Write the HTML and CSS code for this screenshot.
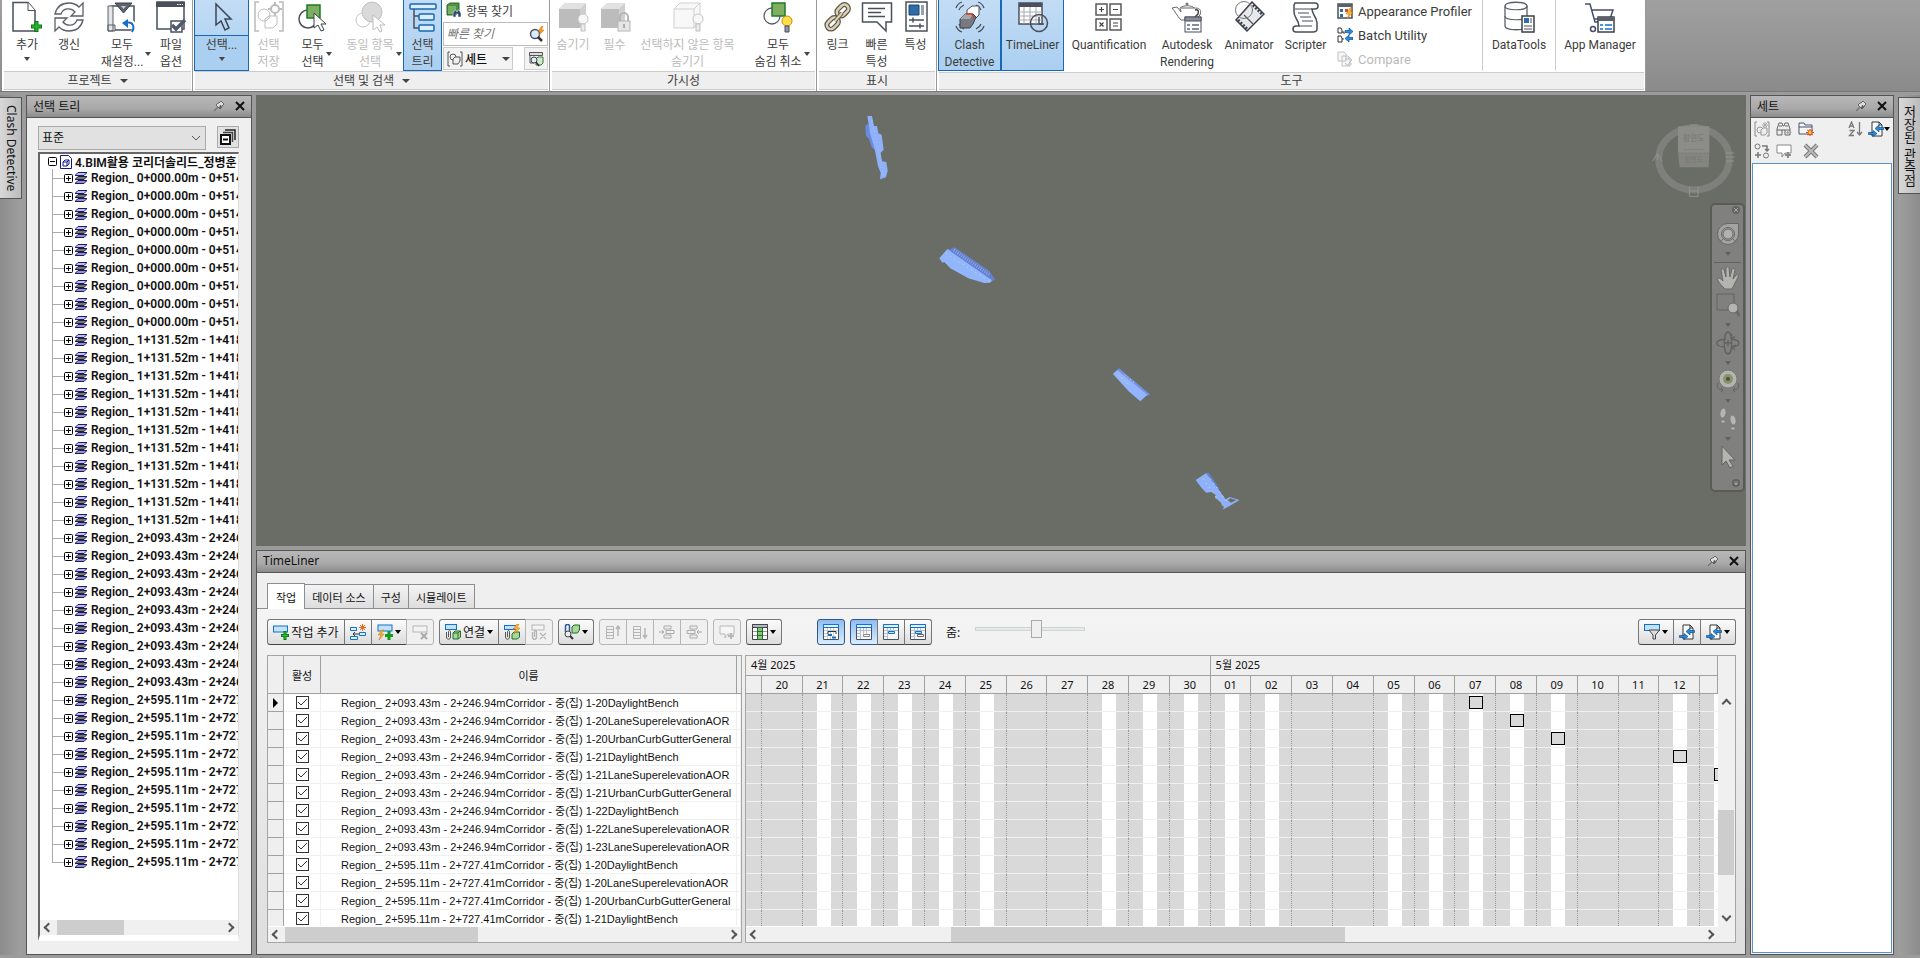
FILE: index.html
```html
<!DOCTYPE html>
<html lang="ko">
  <head>
    <meta charset="utf-8">
    <title>TimeLiner</title>
    <link rel="stylesheet" href="styles.css">
  </head>
  <body>
    <svg class="sprite" aria-hidden="true">
      <defs>
        <linearGradient id="metal" x1="0" y1="0" x2="0" y2="1">
          <stop offset="0" stop-color="#fff"/>
          <stop offset="1" stop-color="#c9ccd2"/>
        </linearGradient>
        <linearGradient id="fade" x1="0" y1="0" x2="0" y2="1">
          <stop offset="0" stop-color="#f6f6f6"/>
          <stop offset="1" stop-color="#d2d2d2"/>
        </linearGradient>
      </defs>

      <!-- ribbon, 32px -->
      <symbol id="i-add" viewBox="0 0 32 32">
        <path d="M2 1.500h15l7 8v20.500h-22z" fill="url(#metal)" stroke="#4a4f5a" stroke-width="1.500"/>
        <path d="M17 1.500v8h7" fill="#fff" stroke="#4a4f5a"/>
        <path d="M25.500 20v11M20 25.500h11" stroke="#0b7a14" stroke-width="4"/>
        <path d="M25.500 21v9M21 25.500h9" stroke="#22b92c" stroke-width="2"/>
      </symbol>
      <symbol id="i-refresh" viewBox="0 0 32 32">
        <path d="M2 13C4 5 10 2 16 2c5 0 8 2 10 4l4-4v13H18l4-4c-4-5-12-4-14 2z" fill="url(#metal)" stroke="#5a5f68" stroke-width="1.300"/>
        <path d="M30 19c-2 8-8 11-14 11-5 0-8-2-10-4l-4 4V17h12l-4 4c4 5 12 4 14-2z" fill="url(#metal)" stroke="#5a5f68" stroke-width="1.300"/>
      </symbol>
      <symbol id="i-reset" viewBox="0 0 32 32">
        <path d="M6 5h22v24H6z" fill="url(#metal)" stroke="#4a4f5a" stroke-width="1.500"/>
        <path d="M2 5h5v25H2zM2 24h7v6H2z" fill="#e4e6ea" stroke="#5a5f68"/>
        <path d="M9 2h17l-8.500 10z" fill="#5d6370" stroke="#3c404a"/>
        <path d="M15 5h5l-2.500 3z" fill="#c9ccd2"/>
        <path d="M20 21c8-2 10 4 7 10" fill="none" stroke="#fff" stroke-width="4"/>
        <path d="M20 22c7-2 9 4 6 9" fill="none" stroke="#1470c8" stroke-width="2"/>
        <path d="M22 18v9l-6-5z" fill="#1470c8"/>
      </symbol>
      <symbol id="i-options" viewBox="0 0 32 32">
        <rect x="2" y="1" width="27" height="27" fill="url(#metal)" stroke="#4a4f5a" stroke-width="1.500"/>
        <path d="M1 1h29v5H1z" fill="#4a4f5a"/>
        <path d="M22 3.500h6" stroke="#fff" stroke-dasharray="1.500 1"/>
        <rect x="16" y="20" width="11" height="11" fill="#fff" stroke="#4a4f5a" stroke-width="1.500"/>
        <path d="M17 24l4 4 9-9" fill="none" stroke="#4f5a6d" stroke-width="3.500"/>
      </symbol>
      <symbol id="i-cursor" viewBox="0 0 32 32">
        <path d="M10 3v21l5-4 4 9 4-2-4-9h6z" fill="url(#metal)" stroke="#3c4656" stroke-width="1.500"/>
      </symbol>
      <symbol id="i-saveset" viewBox="0 0 32 32">
        <path d="M6 1H2v29h4M26 1h4v29h-4" fill="none" stroke="#b9b9b9" stroke-width="1.500"/>
        <circle cx="11" cy="14" r="6" fill="url(#fade)" stroke="#bdbdbd"/>
        <path d="M12 18l4-3h8v8l-4 4h-8z" fill="url(#fade)" stroke="#bdbdbd"/>
        <circle cx="22" cy="8" r="4" fill="none" stroke="#bdbdbd" stroke-width="2"/>
        <path d="M22 1v3M22 12v3M15 8h3M26 8h3" stroke="#bdbdbd" stroke-width="2"/>
      </symbol>
      <symbol id="i-selectall" viewBox="0 0 32 32">
        <circle cx="11" cy="18" r="9" fill="url(#metal)" stroke="#4a4f5a" stroke-width="1.500"/>
        <rect x="10" y="4" width="13" height="13" fill="#7fae63" stroke="#1f7a26" stroke-width="1.500"/>
        <path d="M17 12v15l4-3 3 6 3-1-3-6h5z" fill="#fff" stroke="#3c404a"/>
      </symbol>
      <symbol id="i-selectsame" viewBox="0 0 32 32">
        <circle cx="9" cy="19" r="7" fill="url(#fade)" stroke="#c4c4c4"/>
        <circle cx="18" cy="11" r="10" fill="#d9d9d9" stroke="#c0c0c0"/>
        <path d="M19 14v15l4-3 3 5 2-1-2-6h5z" fill="#fff" stroke="#bdbdbd"/>
      </symbol>
      <symbol id="i-tree" viewBox="0 0 32 32">
        <path d="M7 8v19h8M7 15h8" fill="none" stroke="#4a4f5a" stroke-width="1.500"/>
        <rect x="3" y="3" width="26" height="5" rx="1" fill="#dceefb" stroke="#1668b0" stroke-width="1.500"/>
        <rect x="12" y="13" width="15" height="6" rx="1" fill="#dceefb" stroke="#1668b0" stroke-width="1.500"/>
        <rect x="12" y="24" width="15" height="6" rx="1" fill="#dceefb" stroke="#1668b0" stroke-width="1.500"/>
      </symbol>
      <symbol id="i-hide" viewBox="0 0 32 32">
        <path d="M2 8l6-6h21v19l-6 6H2z" fill="#cfcfcf"/>
        <path d="M2 8h21v19H2z" fill="#bcbcbc"/>
        <path d="M2 8l6-6h21l-6 6z" fill="#e2e2e2"/>
        <circle cx="26" cy="18" r="5" fill="#f7f7f7" stroke="#c6c6c6"/>
        <path d="M24 23h4v7h-4z" fill="#ececec" stroke="#bdbdbd"/>
      </symbol>
      <symbol id="i-require" viewBox="0 0 32 32">
        <path d="M2 8l6-6h18v19l-6 6H2z" fill="#cfcfcf"/>
        <path d="M2 8h18v19H2z" fill="#bcbcbc"/>
        <path d="M2 8l6-6h18l-6 6z" fill="#e2e2e2"/>
        <path d="M21 20v-4a4 4 0 018 0v4" fill="none" stroke="#b5b5b5" stroke-width="2"/>
        <rect x="19" y="20" width="12" height="10" fill="#e6e6e6" stroke="#b5b5b5"/>
        <path d="M25 23v4" stroke="#999" stroke-width="1.500"/>
      </symbol>
      <symbol id="i-unselected" viewBox="0 0 32 32">
        <path d="M2 8l6-6h20v18l-6 7H2zM2 8h20v19M22 8l6-6" fill="#f8f8f8" stroke="#cfcfcf"/>
        <circle cx="26" cy="18" r="5" fill="#f7f7f7" stroke="#c6c6c6"/>
        <path d="M24 23h4v7h-4z" fill="#ececec" stroke="#bdbdbd"/>
      </symbol>
      <symbol id="i-unhide" viewBox="0 0 32 32">
        <circle cx="10" cy="15" r="8" fill="url(#metal)" stroke="#5a5f68" stroke-width="1.300"/>
        <rect x="10" y="2" width="13" height="13" fill="#7fae63" stroke="#1f7a26" stroke-width="1.500"/>
        <circle cx="25" cy="20" r="5" fill="#ffe04a" stroke="#c28a10"/>
        <path d="M23 25h4v6h-4z" fill="#8d97a6" stroke="#4a4f5a"/>
      </symbol>
      <symbol id="i-link" viewBox="0 0 32 32">
        <g fill="none" stroke="#5b564a" stroke-width="5">
          <rect x="17" y="3" width="8" height="13" rx="4" transform="rotate(45 21 9)"/>
          <rect x="7" y="16" width="8" height="13" rx="4" transform="rotate(45 11 22)"/>
        </g>
        <g fill="none" stroke="#ddd2b4" stroke-width="2.500">
          <rect x="17" y="3" width="8" height="13" rx="4" transform="rotate(45 21 9)"/>
          <rect x="7" y="16" width="8" height="13" rx="4" transform="rotate(45 11 22)"/>
        </g>
        <path d="M13 20l7-8" stroke="#5b564a" stroke-width="4"/>
        <path d="M13 20l7-8" stroke="#ddd2b4" stroke-width="2"/>
      </symbol>
      <symbol id="i-quick" viewBox="0 0 32 32">
        <path d="M1.500 2h29v19H25v9l-9-9H1.500z" fill="url(#metal)" stroke="#4a4f5a" stroke-width="1.500"/>
        <path d="M7 7.500h17M7 11.500h13M7 15.500h17" stroke="#4a4f5a" stroke-width="1.500"/>
      </symbol>
      <symbol id="i-props" viewBox="0 0 32 32">
        <rect x="6" y="1" width="21" height="29" fill="url(#metal)" stroke="#4a4f5a" stroke-width="1.500"/>
        <path d="M9 4h10v10H9z" fill="#2d6cab" stroke="#1d456e"/>
        <path d="M21 4h3v10h-3z" fill="#9aa0aa"/>
        <path d="M9 19h15M9 25h15M13 16.500v5M20 22.500v5" stroke="#4a4f5a" stroke-width="1.500"/>
      </symbol>
      <symbol id="i-clash" viewBox="0 0 32 32">
        <path d="M8 1c-3 1-5 3-6 6M10 4C8 5 6 6 5 9M24 1c3 1 5 3 6 6M22 4c2 1 4 2 5 5M8 31c-3-1-5-3-6-6M10 28c-2-1-4-2-5-5M24 31c3-1 5-3 6-6M22 28c2-1 4-2 5-5" fill="none" stroke="#4a4f5a" stroke-width="1.300"/>
        <path d="M13 9l5-4h7v9l-5 5-7-3z" fill="#fff" stroke="#4a4f5a"/>
        <path d="M6 18l5-5h8l3 3-3 7-3 4H6z" fill="#777a80" stroke="#3c404a"/>
        <path d="M6 18l5-5h8l-3 5z" fill="#a5a8ad"/>
        <path d="M12 13h6l2 4" fill="none" stroke="#e03020" stroke-width="1.500"/>
      </symbol>
      <symbol id="i-timeliner" viewBox="0 0 32 32">
        <path d="M2 2h23v21H2z" fill="#fff" stroke="#4a4f5a" stroke-width="1.500"/>
        <path d="M2 2h23v4H2z" fill="#4a4f5a"/>
        <path d="M2 11h23M2 15h23M2 19h23M7 6v17M13 6v17M19 6v17" stroke="#a6a9b0"/>
        <circle cx="22" cy="22" r="8.500" fill="url(#metal)" stroke="#4a4f5a" stroke-width="1.500"/>
        <path d="M22 16v7h5" fill="none" stroke="#4a4f5a" stroke-width="1.500"/>
      </symbol>
      <symbol id="i-quant" viewBox="0 0 32 32">
        <path d="M3 3h11v11H3zM17 3h11v11H17zM3 18h11v11H3zM17 18h11v11H17z" fill="url(#metal)" stroke="#5a5a5a" stroke-width="1.500"/>
        <path d="M6 8.500h5M8.500 6v5M20 8.500h5M6.500 21.500l4 4M10.500 21.500l-4 4M20 22h5M20 25h5" stroke="#444" stroke-width="1.200"/>
      </symbol>
      <symbol id="i-render" viewBox="0 0 32 32">
        <path d="M9 7c3-3 12-3 14 0 5 0 8 1 6 7l-5 5H10C6 15 4 10 1 7l5-1 4 5z" fill="url(#metal)" stroke="#6a6a6a"/>
        <path d="M24 9c3-1 4 1 3 4l-3 3" fill="none" stroke="#444" stroke-width="1.500"/>
        <circle cx="16" cy="3" r="1.500" fill="#777"/>
        <path d="M10 7h13" stroke="#666"/>
        <rect x="14" y="16" width="16" height="15" fill="#fff" stroke="#4a4f5a"/>
        <path d="M14 16h16v4H14z" fill="#8a909c" stroke="#4a4f5a"/>
        <path d="M16 24h3M16 28h3M21 24h7M21 28h7" stroke="#5a6b85" stroke-width="1.500"/>
      </symbol>
      <symbol id="i-animator" viewBox="0 0 32 32">
        <path d="M19 1L31 13 14 30 3 19z" fill="#e8e9ec" stroke="#3c404a" stroke-width="1.500"/>
        <path d="M20 4l9 9M5 19l9 9" stroke="#3c404a" stroke-width="3" stroke-dasharray="2 1.500"/>
        <path d="M11 14l9 9" stroke="#555" stroke-width="1.200"/>
        <circle cx="11" cy="9" r="8.500" fill="url(#metal)" stroke="#777"/>
      </symbol>
      <symbol id="i-scripter" viewBox="0 0 32 32">
        <path d="M5 2h20c4 0 4 6 0 6h-3c0 6 5 8 5 14v6c0 3-3 3-4 3H6c-4 0-4-6 0-6h3c0-6-5-8-5-14V4z" fill="url(#metal)" stroke="#4a4f5a" stroke-width="1.500"/>
        <path d="M5 8h17M9 25h13M8 12h11M10 16h11M12 20h11" stroke="#4a4f5a" stroke-width="1.200"/>
      </symbol>
      <symbol id="i-data" viewBox="0 0 32 32">
        <path d="M2 5c0-5 22-5 22 0v20c0 5-22 5-22 0z" fill="url(#metal)" stroke="#5a5f68" stroke-width="1.300"/>
        <path d="M2 5c0 5 22 5 22 0M2 15c0 5 22 5 22 0" fill="none" stroke="#5a5f68" stroke-width="1.200"/>
        <rect x="19" y="15" width="12" height="16" fill="#fff" stroke="#3c404a" stroke-width="1.500"/>
        <path d="M21 17h5v5h-5z" fill="#2d6cab"/>
        <path d="M28 17v5M21 25h8M21 28h8" stroke="#4a4f5a"/>
      </symbol>
      <symbol id="i-app" viewBox="0 0 32 32">
        <path d="M1 3h5l5 18h16M7 9h22l-3 9H10" fill="url(#metal)" stroke="#454e6e" stroke-width="1.500"/>
        <circle cx="9" cy="28" r="2.500" fill="#fff" stroke="#454e6e" stroke-width="1.500"/>
        <rect x="14" y="16" width="16" height="15" fill="#fff" stroke="#3c404a" stroke-width="1.500"/>
        <path d="M14 16h16v4H14z" fill="#5a5f68"/>
        <path d="M16 24h3M16 28h3M21 24h7M21 28h7" stroke="#1470c8" stroke-width="1.500"/>
      </symbol>

      <!-- small, 16px -->
      <symbol id="s-find" viewBox="0 0 16 16">
        <path d="M1 3l3-2h9v9l-3 3H1z" fill="#4f9147" stroke="#2a6a28"/>
        <path d="M2 4h8v8H2z" fill="#76b061"/>
        <path d="M7 15v-4l2-3h1l1 2 1-2h1l2 3v4h-3v-3h-2v3z" fill="#2e4a78" stroke="#fff" stroke-width=".5"/>
      </symbol>
      <symbol id="s-quickfind" viewBox="0 0 16 16">
        <circle cx="6" cy="8" r="4.500" fill="#d9ecfa" stroke="#4a5464" stroke-width="1.500"/>
        <path d="M9 11l4 4" stroke="#333" stroke-width="2.500"/>
        <path d="M13 0L9 5h2.500L10 9l5-5h-2.500L14 0z" fill="#ff9a1a" stroke="#c66a00" stroke-width=".5"/>
      </symbol>
      <symbol id="s-sets" viewBox="0 0 16 16">
        <path d="M3 1H1v14h2M13 1h2v14h-2" fill="none" stroke="#555"/>
        <circle cx="6" cy="6" r="3" fill="#eee" stroke="#555"/>
        <path d="M6 8l2-2h5v4l-2 3H6z" fill="#eee" stroke="#555"/>
      </symbol>
      <symbol id="s-inspect" viewBox="0 0 16 16">
        <path d="M1.500 1.500h13v3h-13z" fill="#ddd" stroke="#555"/>
        <path d="M2 4v8h4" fill="none" stroke="#555"/>
        <path d="M8 8l2-2h5v6l-2 2H8z" fill="#d5e8cd" stroke="#2f7a35"/>
        <circle cx="6" cy="9" r="3" fill="#dcebf7" stroke="#444"/>
        <path d="M8 11l3 4" stroke="#333" stroke-width="1.500"/>
      </symbol>
      <symbol id="s-appear" viewBox="0 0 16 16">
        <path d="M1 1h14v14H1z" fill="#fff" stroke="#4a4f5a" stroke-width="1.500"/>
        <path d="M1 1h14v3H1z" fill="#5a5f68"/>
        <path d="M3 6h3v3H3zM3 11h3v3H3z" fill="#2d6cab"/><path d="M8 6h3v3H8z" fill="#d34a2e"/>
        <path d="M13 5l-4 6h3l-2 5 6-7h-3l2-4z" fill="#ffb52e" stroke="#c66a00" stroke-width=".5"/>
      </symbol>
      <symbol id="s-batch" viewBox="0 0 16 16">
        <path d="M1 1h3l1 2v3H1zM1 9h3l1 2v4H1zM5 5h2v2M5 12h2" fill="#fff" stroke="#333"/>
        <path d="M8 3.500h4V1l4 3.500L12 8V5.500H8zM16 10.500h-4V8l-4 3.500 4 3.500v-2.500h4z" fill="#2a8ae0" stroke="#0f4d8c" stroke-width=".7"/>
      </symbol>
      <symbol id="s-compare" viewBox="0 0 16 16">
        <path d="M1 1h6l2 2v7H1zM5 5h6l2 2v8H5z" fill="#f6f6f6" stroke="#c2c2c2"/>
        <path d="M8 8h4V6l3 3-3 3M15 13h-4v2l-3-3" fill="none" stroke="#bdbdbd"/>
      </symbol>
      <symbol id="s-pin" viewBox="0 0 12 12">
        <path d="M1 11l4-4" stroke="#777" stroke-width="1.500"/>
        <path d="M3 5l4 4 2-2V6l2-2-3-3-2 2H5z" fill="#ddd" stroke="#666"/>
        <path d="M7 5l2 1-2 3-1-1z" fill="#555"/>
      </symbol>
      <symbol id="s-close" viewBox="0 0 12 12">
        <path d="M2 2l8 8M10 2l-8 8" stroke="#111" stroke-width="2"/>
      </symbol>
      <symbol id="s-collapse" viewBox="0 0 16 16">
        <path d="M5 1h10v10" fill="none" stroke="#222" stroke-width="1.500"/>
        <path d="M3 3.500h9.500V13" fill="none" stroke="#444" stroke-width="1.500"/>
        <rect x="1" y="6" width="9" height="9" fill="#fff" stroke="#111" stroke-width="2"/>
        <path d="M3 10.500h5" stroke="#111" stroke-width="2"/>
      </symbol>
      <symbol id="s-plus" viewBox="0 0 9 9">
        <rect x=".5" y=".5" width="8" height="8" rx="1" fill="#fff" stroke="#000"/>
        <path d="M2 4.500h5M4.500 2v5" stroke="#000"/>
      </symbol>
      <symbol id="s-minus" viewBox="0 0 9 9">
        <rect x=".5" y=".5" width="8" height="8" rx="1" fill="#fff" stroke="#000"/>
        <path d="M2 4.500h5" stroke="#000"/>
      </symbol>
      <symbol id="s-layer" viewBox="0 0 12 12">
        <path d="M3 .5h9l-3 3H0z" fill="#c4c4c4" stroke="#14148c"/>
        <path d="M3 4.500h9l-3 3H0z" fill="#84841a" stroke="#14148c"/>
        <path d="M3 8.500h9l-3 3H0z" fill="#999" stroke="#14148c"/>
      </symbol>
      <symbol id="s-model" viewBox="0 0 12 14">
        <path d="M.5.500h8l3 3v10H.5z" fill="#fff" stroke="#14148c"/>
        <path d="M3 7l2-2h4v4L7 11H3zM3 7h4v4M7 7l2-2" fill="none" stroke="#14148c"/>
      </symbol>

      <!-- sets toolbar -->
      <symbol id="p-save" viewBox="0 0 16 16">
        <path d="M3 1H1v14h2M13 1h2v14h-2" fill="none" stroke="#8a8a8a"/>
        <circle cx="6" cy="9" r="3" fill="#eee" stroke="#999"/>
        <path d="M7 9l2-2h4v5l-2 2H7z" fill="#eee" stroke="#999"/>
        <path d="M11 1v6M8 4h6M9 2l4 4M13 2L9 6" stroke="#aaa"/>
      </symbol>
      <symbol id="p-find" viewBox="0 0 16 16">
        <path d="M1 14V8l2-6h3l1 3h1l1-3h3l2 6v6H9V9H6v5z" fill="#eee" stroke="#666"/>
        <path d="M1 9h5M9 9h5M3 5h3M9 5h3" stroke="#666"/>
        <path d="M12 8v7M8.500 11.500h7M10 9l5 5M15 9l-5 5" stroke="#aaa"/>
      </symbol>
      <symbol id="p-folder" viewBox="0 0 16 16">
        <path d="M1 13V2h5l1 2h7v9z" fill="#f4f6f8" stroke="#4a5468"/>
        <path d="M1 6h13" stroke="#4a5468"/>
        <path d="M12 8v7M8 11.500h8M9.500 9l5 5M14.500 9l-5 5" stroke="#e5481a" stroke-width="1.200"/>
        <circle cx="12" cy="11.500" r="1.500" fill="#ffd83a"/>
      </symbol>
      <symbol id="p-sort" viewBox="0 0 16 16">
        <path d="M1 7l2.500-6L6 7M2 5h3M1.500 9.500H6l-4.500 5H6" fill="none" stroke="#777" stroke-width="1.300"/>
        <path d="M11.500 1v13M9 11l2.500 3 2.500-3" fill="none" stroke="#777" stroke-width="1.300"/>
      </symbol>
      <symbol id="p-export" viewBox="0 0 16 16">
        <path d="M4 1h7l3 3v11H4z" fill="#fff" stroke="#333"/>
        <path d="M11 1v3h3" fill="none" stroke="#333"/>
        <path d="M15.500 6.500H11V4L7 7.500l4 3.500V8.500h4.500zM.5 11.500H5v-2l4 3-4 3v-2H.5z" fill="#2a8ae0" stroke="#0f4d8c" stroke-width=".7"/>
      </symbol>
      <symbol id="p-dup" viewBox="0 0 16 16">
        <circle cx="3.500" cy="3.500" r="2.500" fill="none" stroke="#777"/>
        <circle cx="12" cy="12.500" r="2.500" fill="none" stroke="#777"/>
        <path d="M8 3h5v5M11 6l2 2 2-2M4 9v6M1 12h6" fill="none" stroke="#777" stroke-width="1.500"/>
      </symbol>
      <symbol id="p-comment" viewBox="0 0 16 16">
        <path d="M1 2h14v8H9l-3 4v-4H1z" fill="#fff" stroke="#888"/>
        <path d="M12 9v6M9 12h6" stroke="#888" stroke-width="2"/>
      </symbol>
      <symbol id="p-delete" viewBox="0 0 16 16">
        <path d="M2 2l12 12M14 2L2 14" stroke="#777" stroke-width="4"/>
        <path d="M2 2l12 12M14 2L2 14" stroke="#bbb" stroke-width="2"/>
      </symbol>

      <!-- timeliner toolbar -->
      <symbol id="t-add" viewBox="0 0 16 16">
        <rect x=".5" y="2" width="14" height="6" fill="#c3e2f7" stroke="#1470c8"/>
        <path d="M12 7v9M8 11.500h8" stroke="#0b7a14" stroke-width="3"/>
        <path d="M12 8v7M9 11.500h6" stroke="#2cc636" stroke-width="1"/>
      </symbol>
      <symbol id="t-insert" viewBox="0 0 16 16">
        <path d="M.5 3.500h6v3h-6zM9.500 8.500h6v3h-6zM.5 12.500h7v3h-7z" fill="#dcf0fb" stroke="#1470c8"/>
        <path d="M9 10H3M5 8l-2 2 2 2" fill="none" stroke="#333"/>
        <path d="M12.500 0v7M9 3.500h7M10 1l5 5M15 1l-5 5" stroke="#e5681a"/>
      </symbol>
      <symbol id="t-auto" viewBox="0 0 16 16">
        <rect x="1" y="1" width="14" height="6" fill="#c3e2f7" stroke="#1470c8"/>
        <path d="M5 6l-4 5h3l-2 5 5-6H4l3-4z" fill="#ffb52e" stroke="#c66a00" stroke-width=".5"/>
        <path d="M12 7v9M8 11.500h8" stroke="#149a1e" stroke-width="3"/>
      </symbol>
      <symbol id="t-del" viewBox="0 0 16 16">
        <rect x="1" y="2" width="14" height="6" fill="#f3f3f3" stroke="#b5b5b5"/>
        <path d="M9 9l6 6M15 9l-6 6" stroke="#aaa" stroke-width="2"/>
      </symbol>
      <symbol id="t-attach" viewBox="0 0 16 16">
        <rect x=".5" y=".5" width="11" height="5" fill="#c3e2f7" stroke="#1470c8"/>
        <path d="M1.500 8v5c0 3 4 3 4 0V8c0-2-2-2-2 0v5" fill="none" stroke="#555"/>
        <path d="M8 9l2-2h5.500v6l-2 2H8z" fill="#a9d79a" stroke="#1f6f28"/>
        <path d="M8 9h5v6M13 9l2-2" fill="none" stroke="#1f6f28"/>
      </symbol>
      <symbol id="t-rules" viewBox="0 0 16 16">
        <rect x=".5" y="1.500" width="12" height="4" fill="#c3e2f7" stroke="#1470c8"/>
        <path d="M1.500 8v5c0 3 4 3 4 0V8c0-2-2-2-2 0v5" fill="none" stroke="#555"/>
        <path d="M8 10l2-2h5.500v5l-2 2H8z" fill="#a9d79a" stroke="#1f6f28"/>
        <path d="M13 0L9 5h3l-2 5 6-6h-3l2-4z" fill="#ffb52e" stroke="#c66a00" stroke-width=".5"/>
      </symbol>
      <symbol id="t-clear" viewBox="0 0 16 16">
        <rect x="1" y="1" width="12" height="5" fill="#f3f3f3" stroke="#b5b5b5"/>
        <path d="M1.500 8v5c0 3 4 3 4 0V8c0-2-2-2-2 0v5M9 9l6 6M15 9l-6 6" fill="none" stroke="#b5b5b5" stroke-width="1.300"/>
      </symbol>
      <symbol id="t-findobj" viewBox="0 0 16 16">
        <path d="M1.500 8V2c0-2 4-2 4 0v5" fill="none" stroke="#2d5c9c" stroke-width="1.500"/>
        <path d="M8 3l2-2h5.500v5l-2 3H8z" fill="#a9d79a" stroke="#1f6f28"/>
        <circle cx="4" cy="10" r="3" fill="#eee" stroke="#444"/>
        <path d="M6 12l3 3" stroke="#333" stroke-width="2"/>
      </symbol>
      <symbol id="t-up" viewBox="0 0 16 16">
        <path d="M1.500 2.500h7v12h-7zM1 5.500h8M1 8.500h8M1 11.500h8" fill="none" stroke="#b5b5b5"/>
        <path d="M13 12V2M11 5l2-3 2 3" fill="none" stroke="#b5b5b5" stroke-width="1.500"/>
      </symbol>
      <symbol id="t-down" viewBox="0 0 16 16">
        <path d="M1.500 2.500h7v12h-7zM1 5.500h8M1 8.500h8M1 11.500h8" fill="none" stroke="#b5b5b5"/>
        <path d="M13 4v10M11 11l2 3 2-3" fill="none" stroke="#b5b5b5" stroke-width="1.500"/>
      </symbol>
      <symbol id="t-indent" viewBox="0 0 16 16">
        <path d="M5 2h7v3H5zM7 6.500h8v3H7zM5 11h7v3H5zM0 8h5M3 6l2 2-2 2" fill="none" stroke="#aaa"/>
      </symbol>
      <symbol id="t-outdent" viewBox="0 0 16 16">
        <path d="M4 2h7v3H4zM1 6.500h8v3H1zM4 11h7v3H4zM11 8h5M13 6l-2 2 2 2" fill="none" stroke="#aaa"/>
      </symbol>
      <symbol id="t-comment" viewBox="0 0 16 16">
        <path d="M1 2h14v8H9l-3 4v-4H1z" fill="#f6f6f6" stroke="#b8b8b8"/>
        <path d="M12 9v6M9 12h6" stroke="#b8b8b8" stroke-width="2"/>
      </symbol>
      <symbol id="t-columns" viewBox="0 0 16 16">
        <path d="M.5.500h15v15H.5z" fill="#fff" stroke="#444"/>
        <path d="M.5.500h15v3H.5z" fill="#b4b4cc" stroke="#444"/>
        <path d="M1 7.500h14M1 11.500h14" stroke="#999"/>
        <path d="M5.500 3.500h5v12h-5z" fill="#8cc47c" stroke="#1f6f28"/>
        <path d="M5 7.500h6M5 11.500h6" stroke="#1f6f28"/>
      </symbol>
      <symbol id="t-gantt" viewBox="0 0 16 16">
        <path d="M.5.500h15v15H.5z" fill="#fff" stroke="#4a4f5a"/>
        <path d="M.5.500h15v3H.5z" fill="#dcefff" stroke="#1470c8"/>
        <path d="M4.500 4v11M7.500 4v11M10.500 4v11M1 6.500h14M1 9.500h3M1 12.500h3" stroke="#c4ccd6"/>
        <path d="M5 10V7.500h8V10" stroke="#333" fill="none"/>
        <path d="M5 11h4M9 13.500h4" stroke="#1470c8" stroke-width="2"/>
      </symbol>
      <symbol id="t-plan" viewBox="0 0 16 16">
        <path d="M.5.500h15v15H.5z" fill="#f3f6fa" stroke="#4a4f5a"/>
        <path d="M.5.500h15v3H.5z" fill="#dcefff" stroke="#1470c8"/>
        <path d="M4.500 4v11M7.500 4v6M10.500 4v6M1 6.500h14M1 9.500h3M1 12.500h3" stroke="#b6c0cc"/>
        <path d="M7.500 10.500h6v2h-6z" fill="#fff" stroke="#888"/>
      </symbol>
      <symbol id="t-actual" viewBox="0 0 16 16">
        <path d="M.5.500h15v15H.5z" fill="#f3f6fa" stroke="#4a4f5a"/>
        <path d="M.5.500h15v3H.5z" fill="#dcefff" stroke="#1470c8"/>
        <path d="M4.500 4v11M7.500 4v4M10.500 4v4M1 6.500h14M1 9.500h3M1 12.500h3" stroke="#b6c0cc"/>
        <path d="M5.500 7.500h6v2h-6z" fill="#c3e2f7" stroke="#1470c8"/>
      </symbol>
      <symbol id="t-both" viewBox="0 0 16 16">
        <path d="M.5.500h15v15H.5z" fill="#f3f6fa" stroke="#4a4f5a"/>
        <path d="M.5.500h15v3H.5z" fill="#dcefff" stroke="#1470c8"/>
        <path d="M4.500 4v11M7.500 4v4M10.500 4v4M1 6.500h14M1 9.500h3M1 12.500h3" stroke="#b6c0cc"/>
        <path d="M5.500 7.500h6v2h-6z" fill="#c3e2f7" stroke="#1470c8"/>
        <path d="M7.500 10.500h6v2h-6z" fill="#fff" stroke="#666"/>
      </symbol>
      <symbol id="t-filter" viewBox="0 0 16 16">
        <rect x=".5" y=".5" width="15" height="6" fill="#c3e2f7" stroke="#1470c8"/>
        <path d="M5 6h10.500l-4 5v4H9v-4z" fill="#ddd" stroke="#444"/>
      </symbol>

      <!-- navigation bar -->
      <symbol id="n-wheel" viewBox="0 0 24 24">
        <path d="M12 1.500h10.500V12A10.500 10.500 0 1112 1.500z" fill="#a3a4a0" stroke="#686966"/>
        <circle cx="12" cy="12" r="6.500" fill="none" stroke="#686966"/>
        <circle cx="12" cy="12" r="5" fill="#b1b2ae" stroke="#686966"/>
        <path d="M4 20l4-4M20 20l-4-4" stroke="#686966"/>
      </symbol>
      <symbol id="n-pan" viewBox="0 0 24 24">
        <path d="M9 23c-3-3-6-6-8-10 2-2 4 0 6 2L5 4c1-2 3-1 3 0l2 7V2c1-2 3-1 3 0l1 9 2-8c1-1 3-1 3 1l-2 9 3-4c2-1 3 0 2 2l-4 8-2 4z" fill="#b4b5b1" stroke="#686966"/>
      </symbol>
      <symbol id="n-zoom" viewBox="0 0 24 24">
        <path d="M1 1h17v16H1z" fill="none" stroke="#62635f"/>
        <path d="M20 18l4 5" stroke="#6a6b68" stroke-width="3"/>
        <circle cx="17" cy="15" r="5" fill="#b4b5b1" stroke="#686966"/>
      </symbol>
      <symbol id="n-orbit" viewBox="0 0 24 24">
        <path d="M12 1c5 0 5 22 0 22S7 1 12 1M10 8C-2 9-2 15 8 16M15 8c10 1 11 7 1 8M12 9v6M9 12h6M16 3l-1 4 4-1M20 14l-4 2 3 3" fill="none" stroke="#62635f" stroke-width="1.300"/>
      </symbol>
      <symbol id="n-look" viewBox="0 0 24 24">
        <circle cx="12" cy="10" r="9" fill="#b4b5b0" stroke="#777"/>
        <circle cx="12" cy="10" r="5" fill="#88936c"/>
        <circle cx="12" cy="10" r="2" fill="#4a5144"/>
        <path d="M2 14c-2 3 0 7 4 7M22 14c2 3 0 7-4 7M5 19l2 2-2 2M19 19l-2 2 2 2" fill="none" stroke="#62635f"/>
      </symbol>
      <symbol id="n-walk" viewBox="0 0 24 24">
        <g fill="#b4b5b1" stroke="#777" stroke-width=".7">
          <ellipse cx="7" cy="6" rx="3" ry="5" transform="rotate(12 7 6)"/>
          <path d="M5 13h4v3H5z"/>
          <ellipse cx="17" cy="13" rx="3" ry="5" transform="rotate(-12 17 13)"/>
          <path d="M15 20h4v3h-4z"/>
        </g>
      </symbol>
      <symbol id="n-select" viewBox="0 0 24 24">
        <path d="M6 1v19l4-4 4 7 3-2-4-6h6z" fill="#b4b5b1" stroke="#62635f"/>
      </symbol>
    </svg>

    <header class="ribbon">
      <section class="ribbon-panel">
        <div class="ribbon-tools project-tools">
          <button class="tool"><svg><use href="#i-add"/></svg><span class="tool-label">추가</span><i class="caret"></i></button>
          <button class="tool"><svg><use href="#i-refresh"/></svg><span class="tool-label">갱신</span></button>
          <button class="tool tool-reset"><svg><use href="#i-reset"/></svg><span class="tool-label with-caret"><span>모두<br>재설정...</span><i class="caret"></i></span></button>
          <button class="tool tool-narrow"><svg><use href="#i-options"/></svg><span class="tool-label">파일<br>옵션</span></button>
        </div>
        <h2 class="ribbon-title">프로젝트<i class="caret caret-big"></i></h2>
      </section>

      <section class="ribbon-panel select-panel">
        <div class="ribbon-tools">
          <button class="tool tool-select active split"><svg><use href="#i-cursor"/></svg><span class="tool-label">선택...</span><i class="caret"></i></button>
          <button class="tool tool-small" disabled><svg><use href="#i-saveset"/></svg><span class="tool-label">선택<br>저장</span></button>
          <button class="tool tool-medium"><svg><use href="#i-selectall"/></svg><span class="tool-label with-caret"><span>모두<br>선택</span><i class="caret"></i></span></button>
          <button class="tool tool-wide" disabled><svg><use href="#i-selectsame"/></svg><span class="tool-label with-caret"><span>동일 항목<br>선택</span><i class="caret"></i></span></button>
          <button class="tool tool-small active"><svg><use href="#i-tree"/></svg><span class="tool-label">선택<br>트리</span></button>
          <div class="find-box">
            <button class="find-items"><svg><use href="#s-find"/></svg>항목 찾기</button>
            <label class="quick-find">
              <input type="text" placeholder="빠른 찾기" aria-label="빠른 찾기">
              <svg><use href="#s-quickfind"/></svg>
            </label>
            <div class="sets-row">
              <button class="sets-menu"><svg><use href="#s-sets"/></svg>세트<i class="caret caret-big"></i></button>
              <button class="inspect" aria-label="선택 검사기"><svg><use href="#s-inspect"/></svg></button>
            </div>
          </div>
        </div>
        <h2 class="ribbon-title">선택 및 검색<i class="caret caret-big"></i></h2>
      </section>

      <section class="ribbon-panel">
        <div class="ribbon-tools">
          <button class="tool tool-hide" disabled><svg><use href="#i-hide"/></svg><span class="tool-label">숨기기</span></button>
          <button class="tool tool-small" disabled><svg><use href="#i-require"/></svg><span class="tool-label">필수</span></button>
          <button class="tool tool-unselected" disabled><svg><use href="#i-unselected"/></svg><span class="tool-label">선택하지 않은 항목<br>숨기기</span></button>
          <button class="tool tool-unhide"><svg><use href="#i-unhide"/></svg><span class="tool-label with-caret"><span>모두<br>숨김 취소</span><i class="caret"></i></span></button>
        </div>
        <h2 class="ribbon-title">가시성</h2>
      </section>

      <section class="ribbon-panel">
        <div class="ribbon-tools">
          <button class="tool tool-small"><svg><use href="#i-link"/></svg><span class="tool-label">링크</span></button>
          <button class="tool tool-small"><svg><use href="#i-quick"/></svg><span class="tool-label">빠른<br>특성</span></button>
          <button class="tool tool-small"><svg><use href="#i-props"/></svg><span class="tool-label">특성</span></button>
        </div>
        <h2 class="ribbon-title">표시</h2>
      </section>

      <section class="ribbon-panel">
        <div class="ribbon-tools">
          <button class="tool tool-clash active"><svg><use href="#i-clash"/></svg><span class="tool-label">Clash<br>Detective</span></button>
          <button class="tool tool-clash active"><svg><use href="#i-timeliner"/></svg><span class="tool-label">TimeLiner</span></button>
          <button class="tool tool-quant"><svg><use href="#i-quant"/></svg><span class="tool-label">Quantification</span></button>
          <button class="tool tool-wide"><svg><use href="#i-render"/></svg><span class="tool-label">Autodesk<br>Rendering</span></button>
          <button class="tool tool-animator"><svg><use href="#i-animator"/></svg><span class="tool-label">Animator</span></button>
          <button class="tool tool-select"><svg><use href="#i-scripter"/></svg><span class="tool-label">Scripter</span></button>
          <div class="tool-list">
            <button><svg><use href="#s-appear"/></svg>Appearance Profiler</button>
            <button><svg><use href="#s-batch"/></svg>Batch Utility</button>
            <button disabled><svg><use href="#s-compare"/></svg>Compare</button>
          </div>
          <button class="tool tool-data"><svg><use href="#i-data"/></svg><span class="tool-label">DataTools</span></button>
          <button class="tool tool-app"><svg><use href="#i-app"/></svg><span class="tool-label">App Manager</span></button>
        </div>
        <h2 class="ribbon-title">도구</h2>
      </section>
    </header>

    <div class="workspace">
      <div class="dock dock-left"><button class="dock-tab">Clash Detective</button></div>

      <aside class="panel tree-panel">
        <div class="panel-title">
          <h2>선택 트리</h2>
          <button aria-label="고정"><svg><use href="#s-pin"/></svg></button>
          <button aria-label="닫기"><svg><use href="#s-close"/></svg></button>
        </div>
        <div class="tree-options">
          <select class="tree-select" aria-label="트리 보기"><option>표준</option></select>
          <button class="collapse-button" aria-label="모두 축소"><svg><use href="#s-collapse"/></svg></button>
        </div>
        <div class="tree-box">
          <div class="tree">
            <div class="tree-root"><svg class="toggle"><use href="#s-minus"/></svg><svg class="model"><use href="#s-model"/></svg>4.BIM활용 코리더솔리드_정병훈</div>
            <ul class="js-tree"></ul>
          </div>
          <div class="scrollbar">
            <button class="arrow-left" aria-label="왼쪽"></button>
            <div class="track"><div class="thumb tree-thumb"></div></div>
            <button class="arrow-right" aria-label="오른쪽"></button>
          </div>
        </div>
      </aside>

      <main class="center">
        <section class="viewport">
          <svg class="scene" viewBox="0 0 1490 451" preserveAspectRatio="xMidYMid slice">
            <g transform="translate(594 5) scale(.3333)">
              <path d="M46 78l8-8 26 82-14-9-10-28-8-8z" fill="#6a8ade"/>
              <path d="M52 48h14l6 30h9l4 22 10 4 6 46-9 8 4 26 13 2 4 26-5 20-18 6 2-20-8-20-10-50-14-50z" fill="#8fb0fb"/>
              <path d="M66 62l20 90 14 76" fill="none" stroke="#d8e2b8" stroke-width="2" stroke-dasharray="2 9"/>
              <path d="M290 450l24-8 104 70 17 26-11 8z" fill="#6580cf"/>
              <path d="M312 450l106 74" fill="none" stroke="#9ab4f5" stroke-width="10" stroke-dasharray="2 5"/>
              <path d="M268 475l24-28 134 94-5 7-18 1-48-14-54-30-18-19-6 2z" fill="#92b6fc"/>
              <path d="M288 460l130 84" fill="none" stroke="#eef09a" stroke-width="2" stroke-dasharray="3 12"/>
              <path d="M789 822l18-17 93 78-10 5z" fill="#7290e4"/>
              <path d="M789 822l13-12 90 74-21 20-35-30z" fill="#93b4ff"/>
              <path d="M806 826l30 28M824 824l34 28" stroke="#f0f070" stroke-width="3" stroke-dasharray="3 8"/>
              <path d="M1064 1122l11-5 33 47-2 6-12 4z" fill="#6584d4"/>
              <path d="M1037 1140l31-20 37 48 22 30 12-7 30 9-29 17-22 12 4-8-15-20-12-6 2-10-12-9-16 2-14-14z" fill="#8fb0fb"/>
              <path d="M1133 1200l8-5 18 5-16 8z" fill="#6a6c66"/>
              <path d="M1060 1136l58 82M1080 1136l50 68" fill="none" stroke="#f0f070" stroke-width="3" stroke-dasharray="3 13"/>
            </g>
          </svg>

          <svg class="view-cube" viewBox="36 98 252 225">
            <ellipse cx="162" cy="206" rx="106" ry="93" fill="none" stroke="#7e807b" stroke-width="21"/>
            <path d="M114 108h94v80h-94z" fill="#8c8d89"/>
            <path d="M114 188h94l-2 43h-87z" fill="#848581"/>
            <path d="M112 188h98M132 178h62" stroke="#727370" stroke-width="2" stroke-dasharray="8 3"/>
            <path d="M38 212l14-22 14 22M52 190v20M258 188h24M256 200h28M258 212h24M148 288v30M174 288v30M148 302h26M148 318h26M148 104h26" fill="none" stroke="#92938f" stroke-width="3"/>
            <text x="161" y="152" class="cube-face">평면도</text>
            <text x="161" y="216" class="cube-side">정면도</text>
          </svg>

          <nav class="nav-bar">
            <button class="nav-dot" aria-label="닫기"><svg viewBox="0 0 8 8"><circle cx="4" cy="4" r="4" fill="#62635f"/><path d="M2 2l4 4M6 2L2 6" stroke="#aaa"/></svg></button>
            <button class="nav-button nav-wheel" aria-label="휠"><svg><use href="#n-wheel"/></svg><i class="caret"></i></button>
            <button class="nav-button nav-pan" aria-label="초점이동"><svg><use href="#n-pan"/></svg></button>
            <button class="nav-button" aria-label="줌"><svg><use href="#n-zoom"/></svg><i class="caret"></i></button>
            <button class="nav-button" aria-label="궤도"><svg><use href="#n-orbit"/></svg><i class="caret"></i></button>
            <button class="nav-button" aria-label="둘러보기"><svg><use href="#n-look"/></svg><i class="caret"></i></button>
            <button class="nav-button" aria-label="보행시선"><svg><use href="#n-walk"/></svg><i class="caret"></i></button>
            <button class="nav-button" aria-label="선택"><svg><use href="#n-select"/></svg></button>
            <button class="nav-dot" aria-label="사용자화"><svg viewBox="0 0 8 8"><circle cx="4" cy="4" r="4" fill="#62635f"/><path d="M2 3h4M2.500 4.500h3L4 6z" fill="#aaa" stroke="#aaa" stroke-width=".7"/></svg></button>
          </nav>
        </section>

        <section class="panel timeliner">
          <div class="panel-title">
            <h2>TimeLiner</h2>
            <button aria-label="고정"><svg><use href="#s-pin"/></svg></button>
            <button aria-label="닫기"><svg><use href="#s-close"/></svg></button>
          </div>

          <div class="tabs">
            <button class="tab selected">작업</button>
            <button class="tab">데이터 소스</button>
            <button class="tab">구성</button>
            <button class="tab">시뮬레이트</button>
          </div>

          <div class="task-page">
            <div class="toolbar">
              <div class="group">
                <button class="add-task"><svg><use href="#t-add"/></svg>작업 추가</button>
                <button aria-label="작업 삽입"><svg><use href="#t-insert"/></svg></button>
                <button class="menu" aria-label="작업 자동 추가"><svg><use href="#t-auto"/></svg><i class="caret"></i></button>
                <button disabled aria-label="작업 삭제"><svg><use href="#t-del"/></svg></button>
              </div>
              <div class="group">
                <button class="attach"><svg><use href="#t-attach"/></svg>연결<i class="caret"></i></button>
                <button aria-label="규칙을 사용하여 자동 연결"><svg><use href="#t-rules"/></svg></button>
                <button disabled aria-label="연결 지우기"><svg><use href="#t-clear"/></svg></button>
              </div>
              <div class="group">
                <button class="menu" aria-label="항목 찾기"><svg><use href="#t-findobj"/></svg><i class="caret"></i></button>
              </div>
              <div class="group">
                <button disabled aria-label="위로 이동"><svg><use href="#t-up"/></svg></button>
                <button disabled aria-label="아래로 이동"><svg><use href="#t-down"/></svg></button>
                <button disabled aria-label="들여쓰기"><svg><use href="#t-indent"/></svg></button>
                <button disabled aria-label="내어쓰기"><svg><use href="#t-outdent"/></svg></button>
              </div>
              <div class="group">
                <button disabled aria-label="주석 추가"><svg><use href="#t-comment"/></svg></button>
              </div>
              <div class="group">
                <button class="menu" aria-label="열"><svg><use href="#t-columns"/></svg><i class="caret"></i></button>
              </div>
              <div class="group gantt-group">
                <button class="pressed" aria-label="Gantt 차트 표시"><svg><use href="#t-gantt"/></svg></button>
              </div>
              <div class="group">
                <button class="pressed" aria-label="계획 날짜"><svg><use href="#t-plan"/></svg></button>
                <button aria-label="실제 날짜"><svg><use href="#t-actual"/></svg></button>
                <button aria-label="계획 및 실제 날짜"><svg><use href="#t-both"/></svg></button>
              </div>
              <label class="zoom-label" for="zoom">줌:</label>
              <input class="zoom" id="zoom" type="range" min="0" max="100" value="56">
              <div class="group group-end">
                <button class="menu" aria-label="필터"><svg><use href="#t-filter"/></svg><i class="caret"></i></button>
                <button aria-label="내보내기"><svg><use href="#p-export"/></svg></button>
                <button class="menu" aria-label="일정 내보내기"><svg><use href="#p-export"/></svg><i class="caret"></i></button>
              </div>
            </div>

            <div class="schedule">
              <div class="task-pane">
                <div class="pane-rows">
                  <table class="task-table">
                    <thead>
                      <tr><th class="marker"></th><th class="check">활성</th><th>이름</th><th class="rest"></th></tr>
                    </thead>
                    <tbody class="js-tasks"></tbody>
                  </table>
                </div>
                <div class="scrollbar">
                  <button class="arrow-left" aria-label="왼쪽"></button>
                  <div class="track"><div class="thumb task-thumb"></div></div>
                  <button class="arrow-right" aria-label="오른쪽"></button>
                </div>
              </div>

              <div class="gantt-pane">
                <div class="gantt-main">
                  <div class="pane-rows">
                    <table class="gantt">
                      <thead>
                        <tr class="months"><th>4월 2025</th><th>5월 2025</th></tr>
                        <tr class="days js-days"></tr>
                      </thead>
                      <tbody class="js-gantt"></tbody>
                    </table>
                  </div>
                  <div class="scrollbar">
                    <button class="arrow-left" aria-label="왼쪽"></button>
                    <div class="track"><div class="thumb gantt-thumb"></div></div>
                    <button class="arrow-right" aria-label="오른쪽"></button>
                  </div>
                </div>
                <div class="scrollbar vertical">
                  <button class="arrow-up" aria-label="위로"></button>
                  <div class="track"><div class="thumb row-thumb"></div></div>
                  <button class="arrow-down" aria-label="아래로"></button>
                </div>
              </div>
            </div>
          </div>
        </section>
      </main>

      <aside class="panel sets-panel">
        <div class="panel-title">
          <h2>세트</h2>
          <button aria-label="고정"><svg><use href="#s-pin"/></svg></button>
          <button aria-label="닫기"><svg><use href="#s-close"/></svg></button>
        </div>
        <div class="sets-tools">
          <button aria-label="선택 저장"><svg><use href="#p-save"/></svg></button>
          <button aria-label="검색 저장"><svg><use href="#p-find"/></svg></button>
          <button aria-label="새 폴더"><svg><use href="#p-folder"/></svg></button>
          <button class="push-right" aria-label="정렬"><svg><use href="#p-sort"/></svg></button>
          <button class="menu" aria-label="가져오기/내보내기"><svg><use href="#p-export"/></svg><i class="caret"></i></button>
        </div>
        <div class="sets-tools">
          <button aria-label="복제"><svg><use href="#p-dup"/></svg></button>
          <button aria-label="주석 추가"><svg><use href="#p-comment"/></svg></button>
          <button class="delete-set" aria-label="삭제"><svg><use href="#p-delete"/></svg></button>
        </div>
        <div class="sets-list"></div>
      </aside>

      <div class="dock dock-right"><button class="dock-tab">저장된 관측점</button></div>
    </div>

    <script src="script.js"></script>
  </body>
</html>
```
FILE: styles.css
```css
* {
  box-sizing: border-box;
}

body {
  margin: 0;
  height: 100vh;
  display: flex;
  flex-direction: column;
  overflow: hidden;
  background-color: #9b9b9b;
  color: #111;
  font-family: "Noto Sans", "Noto Sans CJK KR", sans-serif;
  font-size: 12px;
}

button,
input,
select {
  font: inherit;
  color: inherit;
  margin: 0;
  padding: 0;
}

button {
  background: none;
  border: none;
}

h2 {
  margin: 0;
  font-size: 12px;
  font-weight: normal;
}

.sprite {
  display: none;
}

.caret {
  display: block;
  flex: none;
  width: 0;
  border: 3px solid transparent;
  border-top: 4px solid #444;
  border-bottom: none;
}

.caret-big {
  border-width: 4px 4px 0;
}

/* ribbon */

.ribbon {
  flex: none;
  display: flex;
  height: 92px;
  padding-left: 2px;
  background: linear-gradient(#a0a0a0, #8b8b8b);
  border-bottom: 1px solid #777;
  color: #3c3c3c;
  font-family: Roboto, "Noto Sans CJK KR", sans-serif;
}

.ribbon-panel {
  display: flex;
  flex-direction: column;
  background-color: white;
  border-right: 1px solid #999;
}

.ribbon-tools {
  flex: 1;
  display: flex;
  padding: 0 1px;
}

.project-tools {
  padding: 0 4px;
}

.ribbon-title {
  display: flex;
  align-items: center;
  justify-content: center;
  gap: 8px;
  height: 19px;
  margin: 0 1px 1px 2px;
  background-color: #efefef;
  border-top: 1px solid #ccc;
  border-bottom: 1px solid #ccc;
  font-size: 12px;
  line-height: 16px;
}

.tool {
  display: flex;
  flex-direction: column;
  align-items: center;
  width: 42px;
  height: 71px;
  padding-top: 1px;
  border: 1px solid transparent;
  border-top: none;
  white-space: nowrap;
}

.tool svg {
  flex: none;
  width: 32px;
  height: 32px;
  margin-bottom: 4px;
}

.tool:disabled,
.tool-list button:disabled {
  color: #bbb;
}

.tool-label {
  font-size: 12px;
  line-height: 17px;
}

.with-caret {
  display: grid;
  grid-template-columns: 8px auto 8px;
  align-items: center;
  justify-content: center;
}

.with-caret span {
  grid-column: 2;
}

.with-caret .caret {
  margin-left: 2px;
}

.tool > .caret {
  margin-top: 3px;
}

.active {
  background: linear-gradient(#c3dcf5, #abcff0);
  border-color: #1668b8;
}

.split {
  background: linear-gradient(#c3dcf5 0, #b6d6f3 35px, #1668b8 35px, #1668b8 36px, #abcff0 36px);
}

.tool-narrow {
  width: 34px;
}

.tool-small {
  width: 39px;
}

.tool-hide {
  width: 44px;
}

.tool-medium {
  width: 49px;
}

.tool-select {
  width: 55px;
}

.tool-animator {
  width: 58px;
}

.tool-clash {
  width: 63px;
}

.tool-reset {
  width: 64px;
}

.tool-wide {
  width: 66px;
}

.tool-unhide {
  width: 74px;
}

.tool-quant {
  width: 90px;
}

.tool-data {
  width: 74px;
  border-left-color: #ccc;
  border-right-color: #ccc;
}

.tool-app {
  width: 88px;
}

.tool-unselected {
  width: 107px;
}

.find-box {
  width: 106px;
  padding-left: 1px;
}

.find-items {
  display: flex;
  align-items: center;
  gap: 4px;
  height: 20px;
  padding-left: 3px;
}

.find-box svg,
.tool-list svg {
  width: 16px;
  height: 16px;
  flex: none;
}

.quick-find {
  display: flex;
  align-items: center;
  height: 24px;
  margin-top: 2px;
  padding-right: 2px;
  border: 1px solid #bbb;
}

.quick-find input {
  flex: 1;
  min-width: 0;
  border: none;
  padding-left: 3px;
  font-style: italic;
}

.quick-find input::placeholder {
  color: #777;
}

.sets-row {
  display: flex;
  margin-top: 1px;
  gap: 11px;
}

.sets-menu {
  display: flex;
  align-items: center;
  gap: 2px;
  width: 70px;
  height: 23px;
  padding: 0 2px 0 3px;
  background-color: #f3f3f3;
  border: 1px solid #ccc;
  color: #111;
  font-weight: 500;
}

.sets-menu .caret {
  margin-left: auto;
}

.inspect {
  display: grid;
  place-items: center;
  width: 24px;
  height: 23px;
  background-color: #f3f3f3;
  border: 1px solid #ccc;
}

.tool-list {
  width: 149px;
  padding-left: 4px;
}

.tool-list button {
  display: flex;
  align-items: center;
  gap: 5px;
  height: 24px;
  padding-bottom: 2px;
  font-size: 13px;
}

/* workspace */

.workspace {
  flex: 1;
  min-height: 0;
  display: flex;
  padding: 3px 0;
  gap: 4px;
}

.dock {
  flex: none;
  width: 22px;
  background: linear-gradient(to right, #8c8c8c, #9f9f9f);
}

.dock-right {
  background: linear-gradient(to left, #8c8c8c, #9f9f9f);
}

.dock-tab {
  display: block;
  width: 22px;
  margin-top: 2px;
  padding: 7px 0;
  writing-mode: vertical-rl;
  line-height: 20px;
  background: linear-gradient(to right, #d8d8d8, #bcbcbc);
  border: 1px solid #555;
  border-left: none;
}

.dock-right .dock-tab {
  border-left: 1px solid #555;
  border-right: none;
  font-size: 13px;
}

.panel {
  display: flex;
  flex-direction: column;
  background-color: #efefef;
  border: 1px solid #555;
}

.panel-title {
  flex: none;
  display: flex;
  align-items: center;
  gap: 9px;
  height: 22px;
  padding: 0 5px 2px 6px;
  background: linear-gradient(#b8b8b8, #a9a9a9 60%, #8b8b8b);
  border-bottom: 1px solid #555;
}

.panel-title h2 {
  flex: 1;
}

.panel-title svg {
  display: block;
  width: 12px;
  height: 12px;
}

/* selection tree */

.tree-panel {
  flex: none;
  width: 226px;
  padding-bottom: 13px;
}

.tree-options {
  display: flex;
  justify-content: space-between;
  padding: 8px 12px 2px 11px;
}

.tree-select {
  width: 168px;
  height: 24px;
  padding: 0 0 2px 3px;
  appearance: none;
  border: 1px solid #aaa;
  border-radius: 0;
  background: #e1e1e1 url("data:image/svg+xml,%3Csvg xmlns='http://www.w3.org/2000/svg' width='10' height='6'%3E%3Cpath d='M1 1l4 4 4-4' fill='none' stroke='%23555'/%3E%3C/svg%3E") no-repeat right 4px center;
}

.collapse-button {
  display: grid;
  place-items: center;
  width: 22px;
  height: 22px;
  background-color: #e1e1e1;
  border: 1px solid #aaa;
}

.collapse-button svg {
  width: 16px;
  height: 16px;
}

.tree-box {
  flex: 1;
  min-height: 0;
  display: flex;
  flex-direction: column;
  margin: 0 12px 0 11px;
  background-color: white;
  border: 1px solid #ddd;
  border-left: 2px solid #666;
  border-top: 2px solid #666;
  border-bottom: 6px solid white;
}

.tree {
  flex: 1;
  min-height: 0;
  overflow: hidden;
  white-space: nowrap;
  font-family: Roboto, "Noto Sans CJK KR", sans-serif;
  font-weight: 600;
}

.tree-root {
  display: flex;
  align-items: center;
  gap: 3px;
  height: 15px;
  padding-left: 8px;
}

.toggle {
  flex: none;
  width: 9px;
  height: 9px;
}

.model {
  flex: none;
  width: 12px;
  height: 14px;
}

.tree ul {
  list-style: none;
  margin: 0 0 0 12px;
  padding: 0;
}

.tree li {
  display: flex;
  align-items: center;
  height: 18px;
  background: linear-gradient(#aaa, #aaa) no-repeat 0 0 / 1px 18px;
}

.tree li:last-child {
  background-size: 1px 9px;
}

.tree li::before {
  content: "";
  flex: none;
  width: 12px;
  height: 1px;
  background-color: #aaa;
}

.layer {
  flex: none;
  width: 12px;
  height: 12px;
  margin: 0 4px 0 2px;
}

/* scrollbars */

.scrollbar {
  flex: none;
  display: flex;
  height: 15px;
  background-color: #f0f0f0;
}

.scrollbar button {
  flex: none;
  display: grid;
  place-items: center;
  width: 17px;
}

.scrollbar button::before {
  content: "";
  width: 5px;
  height: 5px;
  border: 2px solid #555;
  border-right: none;
  border-bottom: none;
}

.arrow-left::before {
  transform: rotate(-45deg);
}

.arrow-right::before {
  transform: rotate(135deg);
}

.arrow-up::before {
  transform: rotate(45deg);
}

.arrow-down::before {
  transform: rotate(225deg);
}

.track {
  flex: 1;
}

.thumb {
  height: 100%;
  background-color: #cdcdcd;
}

.tree-thumb {
  width: 41%;
}

.task-thumb {
  width: 44%;
}

.gantt-thumb {
  width: 42%;
  margin-left: 20%;
}

.vertical {
  flex-direction: column;
  width: 17px;
  height: auto;
  padding: 39px 1px 17px 0;
}

.vertical button {
  width: 16px;
  height: 17px;
}

.vertical .track {
  display: flex;
  align-items: center;
}

.row-thumb {
  flex: 1;
  height: 33%;
  margin-top: 65px;
}

/* 3D view */

.center {
  flex: 1;
  min-width: 0;
  display: flex;
  flex-direction: column;
  gap: 4px;
}

.viewport {
  position: relative;
  flex: 1;
  min-height: 0;
  overflow: hidden;
  background-color: #6a6c66;
}

.scene {
  display: block;
  width: 100%;
  height: 100%;
}

.view-cube {
  position: absolute;
  top: 28px;
  right: 10px;
  width: 84px;
  height: 75px;
}

.cube-face {
  font-size: 24px;
  fill: #767773;
  text-anchor: middle;
}

.cube-side {
  font-size: 20px;
  fill: #767773;
  text-anchor: middle;
}

.nav-bar {
  position: absolute;
  top: 108px;
  right: 1px;
  display: flex;
  flex-direction: column;
  align-items: center;
  width: 35px;
  background-color: #80817e;
  border: 2px solid #5a5b58;
  border-radius: 5px;
}

.nav-dot {
  align-self: flex-end;
  width: 8px;
  height: 8px;
  margin: 1px 3px 5px 0;
}

.nav-dot svg {
  display: block;
  width: 8px;
  height: 8px;
}

.nav-dot:last-child {
  margin-top: 10px;
  margin-bottom: 3px;
}

.nav-button {
  display: flex;
  flex-direction: column;
  align-items: center;
  gap: 6px;
  width: 27px;
  height: 38px;
}

.nav-button svg {
  width: 24px;
  height: 24px;
}

.nav-button:nth-last-child(2) {
  height: 24px;
}

.nav-bar .caret {
  border-top-color: #62635f;
}

.nav-wheel {
  height: 44px;
  padding-top: 3px;
  border-bottom: 1px solid #62635f;
}

.nav-pan {
  height: 30px;
  padding-top: 3px;
}

/* timeliner */

.timeliner {
  flex: none;
  height: 405px;
}

.tabs {
  flex: none;
  display: flex;
  align-items: flex-end;
  height: 36px;
  padding-left: 10px;
  border-bottom: 1px solid #8d8d96;
}

.tab {
  height: 24px;
  padding: 0 7px;
  background: linear-gradient(#f3f3f3, #dedede);
  border: 1px solid #8d8d96;
  border-bottom: none;
  margin-left: -1px;
  font-size: 11px;
}

.tab.selected {
  height: 26px;
  padding: 0 8px;
  margin-left: 0;
  margin-bottom: -1px;
  background: white;
}

.task-page {
  flex: 1;
  min-height: 0;
  display: flex;
  flex-direction: column;
  padding: 10px 9px 11px 10px;
  background: linear-gradient(#f4f4f4, #dedede);
}

.toolbar {
  display: flex;
  align-items: center;
  gap: 5px;
  margin-bottom: 10px;
}

.group {
  display: flex;
}

.group button {
  display: flex;
  align-items: center;
  justify-content: center;
  gap: 2px;
  width: 28px;
  height: 26px;
  margin-left: -1px;
  background: linear-gradient(#fcfcfc, #dcdcdc);
  border: 1px solid #777;
  border-bottom-color: #444;
}

.group button:first-child {
  margin-left: 0;
  border-top-left-radius: 3px;
  border-bottom-left-radius: 3px;
}

.group button:last-child {
  border-top-right-radius: 3px;
  border-bottom-right-radius: 3px;
}

.group button:disabled {
  background: #f0f0f0;
  border-color: #b5b5b5;
}

.group svg {
  flex: none;
  width: 16px;
  height: 16px;
}

.group .caret,
.sets-tools .caret {
  border-top-color: #000;
}

.group .menu {
  width: 36px;
}

.group .add-task {
  width: 78px;
}

.group .attach {
  width: 60px;
}

.group .pressed {
  background: linear-gradient(#8fbdf0, #d9edff);
  border-color: #33558c;
}

.gantt-group {
  margin-left: 30px;
}

.zoom-label {
  margin-left: 9px;
}

.zoom {
  width: 110px;
  height: 18px;
  margin: 0 0 6px 10px;
  appearance: none;
  background: none;
}

.zoom::-webkit-slider-runnable-track {
  height: 4px;
  background-color: #e7eaea;
  border: 1px solid #d0d3d3;
}

.zoom::-webkit-slider-thumb {
  appearance: none;
  width: 11px;
  height: 18px;
  margin-top: -8px;
  background-color: #f0f0f0;
  border: 1px solid #aaa;
}

.group-end {
  margin-left: auto;
}

.schedule {
  flex: 1;
  min-height: 0;
  display: flex;
  gap: 3px;
}

.task-pane,
.gantt-pane {
  border: 1px solid #a5a5a5;
  background-color: #f0f0f0;
}

.task-pane {
  flex: none;
  display: flex;
  flex-direction: column;
  width: 475px;
}

.pane-rows {
  flex: 1;
  min-height: 0;
  overflow: hidden;
  border-bottom: 1px solid white;
}

.task-table,
.gantt {
  width: 100%;
  table-layout: fixed;
  border-collapse: separate;
  border-spacing: 0;
  font-size: 11px;
}

.task-table {
  font-family: "Liberation Sans", "Noto Sans CJK KR", sans-serif;
}

.task-table th {
  height: 38px;
  padding: 0;
  background-color: #efefef;
  border-right: 1px solid #a0a0a0;
  border-bottom: 1px solid #a0a0a0;
  font-weight: normal;
}

.task-table .marker {
  width: 16px;
}

.task-table .check {
  width: 37px;
}

.task-table .rest {
  width: 4px;
  border-right: none;
}

.task-table td {
  height: 18px;
  padding: 0;
  background-color: white;
  border-right: 1px solid #f0f0f0;
  border-bottom: 1px solid #f0f0f0;
  line-height: 16px;
  text-align: center;
  white-space: nowrap;
}

.task-table td:first-child {
  background-color: #efefef;
  border-right: 1px solid #a0a0a0;
  border-bottom: 1px solid #a0a0a0;
}

.task-table .name {
  padding-left: 20px;
  text-align: left;
}

.current {
  display: block;
  width: 0;
  margin-left: 5px;
  border: 5px solid transparent;
  border-left-color: #000;
  border-right: none;
}

.task-table input {
  display: block;
  width: 13px;
  height: 13px;
  margin: 0 auto;
  appearance: none;
  border: 1px solid #333;
  background: white url("data:image/svg+xml,%3Csvg xmlns='http://www.w3.org/2000/svg' width='11' height='11'%3E%3Cpath d='M1 5l3 3 6-6' fill='none' stroke='%23333'/%3E%3C/svg%3E") no-repeat center;
}

.gantt-pane {
  flex: 1;
  min-width: 0;
  display: flex;
}

.gantt-main {
  flex: 1;
  min-width: 0;
  display: flex;
  flex-direction: column;
}

.gantt tr {
  display: grid;
  grid-template-columns: 16fr repeat(23, 41fr) 18fr;
}

.gantt th {
  padding: 0;
  background-color: #efefef;
  border-bottom: 1px solid #a0a0a0;
  border-right: 1px solid #a0a0a0;
  font-weight: normal;
  text-align: center;
  line-height: 17px;
}

.gantt .months th {
  grid-column: span 12;
  height: 20px;
  padding-left: 5px;
  text-align: left;
  line-height: 18px;
}

.gantt .months th:last-child {
  grid-column: span 13;
}

.gantt .days th {
  height: 18px;
}

.gantt td {
  height: 18px;
  padding: 2px 0 0 14px;
  overflow: hidden;
  background-color: #d9d9d9;
  border-right: 1px dotted #999;
  border-bottom: 1px solid #f0f0f0;
}

.gantt td:last-child {
  border-right: none;
}

.gantt .workday {
  background-image: linear-gradient(to right, #d9d9d9 14px, white 14px, white 28px, #d9d9d9 28px);
}

.bar {
  display: block;
  width: 14px;
  height: 13px;
  background-color: #d9d9d9;
  border: 1px solid #000;
}

/* sets */

.sets-panel {
  flex: none;
  width: 144px;
}

.sets-tools {
  display: flex;
  height: 22px;
  padding: 1px;
  gap: 2px;
}

.sets-tools button {
  display: grid;
  place-items: center;
  width: 20px;
  height: 20px;
}

.sets-tools svg {
  width: 16px;
  height: 16px;
}

.sets-tools .menu {
  display: flex;
  align-items: center;
  width: 24px;
}

.sets-tools .push-right {
  margin-left: auto;
}

.sets-tools .delete-set {
  margin-left: 5px;
}

.sets-list {
  flex: 1;
  margin: 1px;
  background-color: white;
  border: 1px solid #5b93cc;
}
```
FILE: script.js
```js
const treeGroups = [
  { name: 'Region_ 0+000.00m - 0+514', count: 9 },
  { name: 'Region_ 1+131.52m - 1+418.5', count: 11 },
  { name: 'Region_ 2+093.43m - 2+246', count: 9 },
  { name: 'Region_ 2+595.11m - 2+727.4', count: 10 }
];

let treeHTML = '';

treeGroups.forEach((group) => {
  for (let i = 0; i < group.count; i++) {
    treeHTML += `
      <li>
        <svg class="toggle"><use href="#s-plus"/></svg>
        <svg class="layer"><use href="#s-layer"/></svg>${group.name}
      </li>
    `;
  }
});

document.querySelector('.js-tree').innerHTML = treeHTML;

const first = 'Region_ 2+093.43m - 2+246.94mCorridor - 중(집) ';
const second = 'Region_ 2+595.11m - 2+727.41mCorridor - 중(집) ';

// day is the column of the bar in the chart
const tasks = [
  { name: first + '1-20DaylightBench', day: '07' },
  { name: first + '1-20LaneSuperelevationAOR', day: '08' },
  { name: first + '1-20UrbanCurbGutterGeneral', day: '09' },
  { name: first + '1-21DaylightBench', day: '12' },
  { name: first + '1-21LaneSuperelevationAOR', day: '13' },
  { name: first + '1-21UrbanCurbGutterGeneral' },
  { name: first + '1-22DaylightBench' },
  { name: first + '1-22LaneSuperelevationAOR' },
  { name: first + '1-23LaneSuperelevationAOR' },
  { name: second + '1-20DaylightBench' },
  { name: second + '1-20LaneSuperelevationAOR' },
  { name: second + '1-20UrbanCurbGutterGeneral' },
  { name: second + '1-21DaylightBench' }
];

const days = [
  '19', '20', '21', '22', '23', '24', '25', '26', '27', '28', '29', '30',
  '01', '02', '03', '04', '05', '06', '07', '08', '09', '10', '11', '12', '13'
];
const daysOff = ['19', '20', '26', '27', '03', '04', '10', '11'];

let daysHTML = '';
days.forEach((day, index) => {
  const isCut = index === 0 || index === days.length - 1;
  daysHTML += `<th>${isCut ? '' : day}</th>`;
});
document.querySelector('.js-days').innerHTML = daysHTML;

let tasksHTML = '';
let ganttHTML = '';

tasks.forEach((task, index) => {
  tasksHTML += `
    <tr>
      <td>${index === 0 ? '<i class="current"></i>' : ''}</td>
      <td><input type="checkbox" checked aria-label="활성"></td>
      <td class="name">${task.name}</td>
      <td></td>
    </tr>
  `;

  ganttHTML += '<tr>';
  days.forEach((day) => {
    const className = daysOff.includes(day) ? '' : 'workday';
    const bar = task.day === day ? '<span class="bar"></span>' : '';
    ganttHTML += `<td class="${className}">${bar}</td>`;
  });
  ganttHTML += '</tr>';
});

document.querySelector('.js-tasks').innerHTML = tasksHTML;
document.querySelector('.js-gantt').innerHTML = ganttHTML;
```
